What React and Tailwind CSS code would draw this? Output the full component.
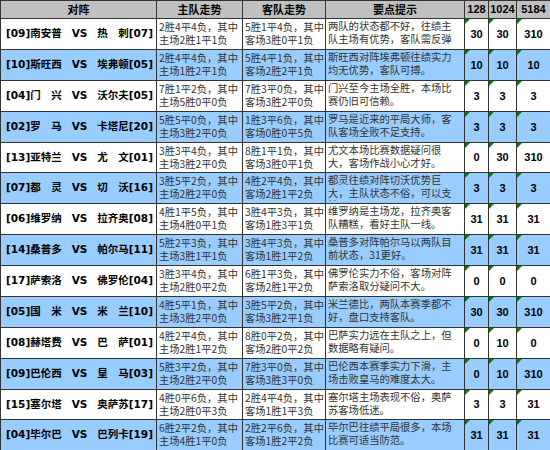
const rows = [
  { home: '[09]南安普', away: '热　刺[07]', h: ['2胜4平4负，其中', '主场2胜1平1负'], a: ['5胜1平4负，其中', '客场3胜0平1负'], tip: ['两队的状态都不好，往绩主', '队主场有优势，客队需反弹'], n: ['30', '30', '310'] },
  { home: '[10]斯旺西', away: '埃弗顿[05]', h: ['2胜4平4负，其中', '主场1胜2平1负'], a: ['5胜4平1负，其中', '客场2胜2平1负'], tip: ['斯旺西对阵埃弗顿往绩实力', '均无优势，客队可搏。'], n: ['10', '10', '10'] },
  { home: '[04]门　兴', away: '沃尔夫[05]', h: ['7胜1平2负，其中', '主场5胜0平0负'], a: ['7胜3平0负，其中', '客场3胜2平0负'], tip: ['门兴至今主场全胜，本场比', '赛仍旧可信赖。'], n: ['3', '3', '3'] },
  { home: '[02]罗　马', away: '卡塔尼[20]', h: ['5胜5平0负，其中', '主场3胜2平0负'], a: ['1胜3平6负，其中', '客场0胜0平5负'], tip: ['罗马是近来的平局大师，客', '队客场全败不足支持。'], n: ['3', '3', '3'] },
  { home: '[13]亚特兰', away: '尤　文[01]', h: ['3胜3平4负，其中', '主场3胜2平0负'], a: ['8胜1平1负，其中', '客场3胜0平1负'], tip: ['尤文本场比赛数据疑问很', '大，客场作战小心才好。'], n: ['0', '30', '310'] },
  { home: '[07]都　灵', away: '切　沃[16]', h: ['3胜5平2负，其中', '主场2胜2平0负'], a: ['4胜2平4负，其中', '客场2胜1平2负'], tip: ['都灵往绩对阵切沃优势巨', '大，主队状态不俗，可以支', '持。'], n: ['3', '3', '3'] },
  { home: '[06]维罗纳', away: '拉齐奥[08]', h: ['4胜1平5负，其中', '主场4胜0平1负'], a: ['3胜4平3负，其中', '客场1胜3平1负'], tip: ['维罗纳是主场龙，拉齐奥客', '队糟糕，看好主队一线。'], n: ['31', '31', '31'] },
  { home: '[14]桑普多', away: '帕尔马[11]', h: ['5胜2平3负，其中', '主场3胜1平1负'], a: ['3胜4平3负，其中', '客场1胜1平2负'], tip: ['桑普多对阵帕尔马以两队目', '前状态，31更好。'], n: ['31', '31', '31'] },
  { home: '[17]萨索洛', away: '佛罗伦[04]', h: ['3胜3平4负，其中', '主场2胜0平2负'], a: ['6胜1平3负，其中', '客场2胜1平2负'], tip: ['佛罗伦实力不俗，客场对阵', '萨索洛取分疑问不大。'], n: ['0', '0', '0'] },
  { home: '[05]国　米', away: '米　兰[10]', h: ['4胜5平1负，其中', '主场3胜2平0负'], a: ['3胜5平2负，其中', '客场3胜2平1负'], tip: ['米兰德比，两队本赛季都不', '好，盘口支持客队。'], n: ['30', '30', '310'] },
  { home: '[08]赫塔费', away: '巴　萨[01]', h: ['4胜2平4负，其中', '主场2胜1平2负'], a: ['8胜0平2负，其中', '客场2胜0平2负'], tip: ['巴萨实力远在主队之上，但', '数据略有疑问。'], n: ['0', '10', '0'] },
  { home: '[09]巴伦西', away: '皇　马[03]', h: ['5胜3平2负，其中', '主场2胜2平0负'], a: ['7胜3平0负，其中', '客场3胜3平0负'], tip: ['巴伦西本赛季实力下滑，主', '场击败皇马的难度太大。'], n: ['0', '10', '310'] },
  { home: '[15]塞尔塔', away: '奥萨苏[17]', h: ['4胜0平6负，其中', '主场2胜0平3负'], a: ['2胜4平4负，其中', '客场1胜1平3负'], tip: ['塞尔塔主场表现不俗，奥萨', '苏客场低迷。'], n: ['3', '3', '31'] },
  { home: '[04]毕尔巴', away: '巴列卡[19]', h: ['6胜2平2负，其中', '主场4胜1平0负'], a: ['2胜2平6负，其中', '客场1胜2平2负'], tip: ['毕尔巴往绩平局很多，本场', '比赛可适当防范。'], n: ['31', '31', '31'] },
];

// a couple of rows are 1px shorter so the last row ends at the bottom edge
const rowHeights = [
  'h-[31px]', 'h-[31px]', 'h-[31px]', 'h-[31px]', 'h-[30px]', 'h-[31px]', 'h-[31px]',
  'h-[31px]', 'h-[31px]', 'h-[31px]', 'h-[31px]', 'h-[31px]', 'h-[30px]', 'h-[31px]',
];

const cell = 'border border-[#333] p-0';
const cjk = "font-['Noto_Sans_CJK_SC',sans-serif]";
const num = "font-['Liberation_Sans',Arial,sans-serif] font-bold text-[11px] text-black";

function Flag() {
  return (
    <span className="absolute left-0 top-0 h-0 w-0 border-r-[5px] border-t-[5px] border-r-transparent border-t-[#008000]" />
  );
}

function Lines({ lines, leading }) {
  return (
    <div className={`h-[28px] overflow-hidden whitespace-nowrap px-[2px] pt-[1px] text-[10.3px] text-[#333] ${leading}`}>
      {lines.map((l, i) => (
        <div key={i}>{l}</div>
      ))}
    </div>
  );
}

export default function App() {
  return (
    <div className="w-[550px] h-[450px] overflow-hidden bg-white">
      <table className={`w-[550px] table-fixed border-collapse ${cjk}`}>
        <colgroup>
          <col className="w-[156px]" />
          <col className="w-[86px]" />
          <col className="w-[83px]" />
          <col className="w-[139px]" />
          <col className="w-[24px]" />
          <col className="w-[28px]" />
          <col className="w-[34px]" />
        </colgroup>
        <thead>
          <tr className="h-[18px] bg-[#c0c0c0] text-[11px] font-bold text-black">
            <th className={cell}>对阵</th>
            <th className={cell}>主队走势</th>
            <th className={cell}>客队走势</th>
            <th className={cell}>要点提示</th>
            <th className={`${cell} ${num}`}>128</th>
            <th className={`${cell} ${num}`}>1024</th>
            <th className={`${cell} ${num}`}>5184</th>
          </tr>
        </thead>
        <tbody>
          {rows.map((r, i) => (
            <tr key={i} className={`${rowHeights[i]} ${i % 2 ? 'bg-[#99ccff]' : 'bg-white'}`}>
              <td className={`${cell} align-middle`}>
                <div className="flex items-center justify-between whitespace-pre pl-[5px] pr-[3px] font-['DejaVu_Sans','Noto_Sans_CJK_SC',sans-serif] text-[10.5px] font-bold text-black">
                  <span>{r.home}</span>
                  <span>VS</span>
                  <span>{r.away}</span>
                </div>
              </td>
              <td className={`${cell} align-top`}>
                <Lines lines={r.h} leading="leading-[13px]" />
              </td>
              <td className={`${cell} align-top`}>
                <Lines lines={r.a} leading="leading-[13px]" />
              </td>
              <td className={`${cell} align-top`}>
                <Lines lines={r.tip} leading="leading-[12.5px]" />
              </td>
              {r.n.map((v, j) => (
                <td key={j} className={`${cell} relative text-center align-middle ${num}`}>
                  <Flag />
                  {v}
                </td>
              ))}
            </tr>
          ))}
        </tbody>
      </table>
    </div>
  );
}
